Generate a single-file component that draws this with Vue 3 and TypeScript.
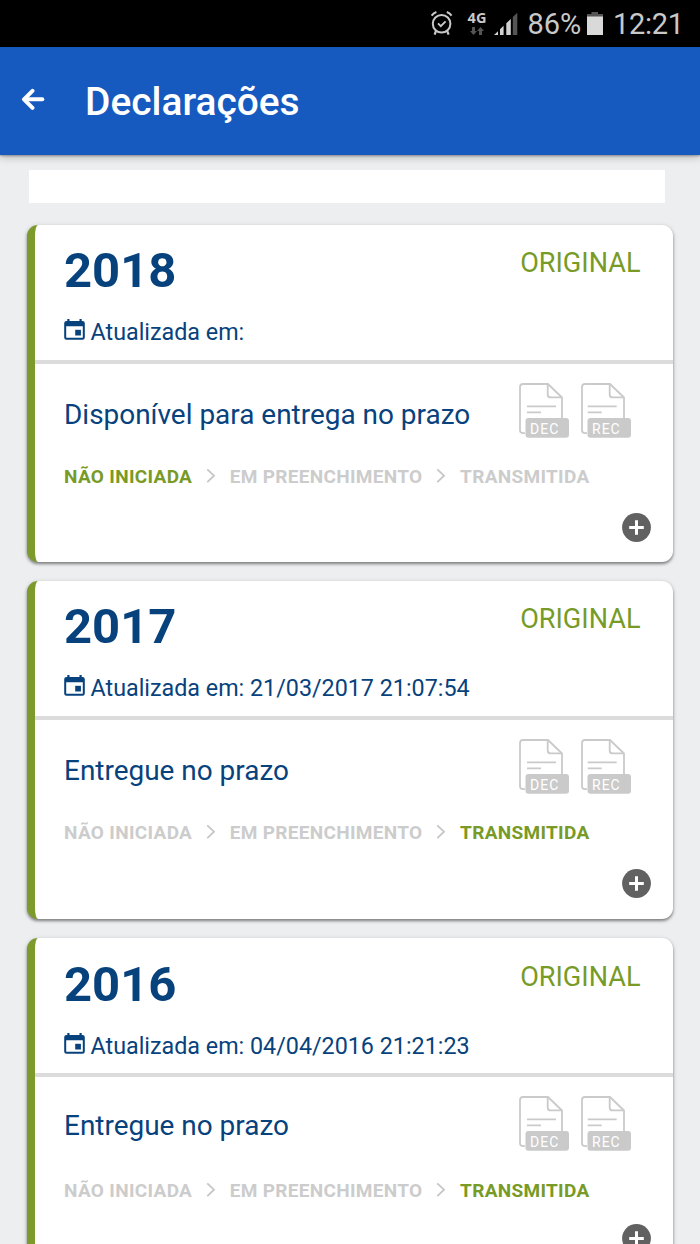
<script setup lang="ts">
interface Declaration {
  year: number
  updated: string
  status: string
  step: number
}

const steps: string[] = ['NÃO INICIADA', 'EM PREENCHIMENTO', 'TRANSMITIDA']

const files = [
  { label: 'DEC', shift: 0 },
  { label: 'REC', shift: -1.3 },
]

const declarations: Declaration[] = [
  { year: 2018, updated: '', status: 'Disponível para entrega no prazo', step: 0 },
  { year: 2017, updated: '21/03/2017 21:07:54', status: 'Entregue no prazo', step: 2 },
  { year: 2016, updated: '04/04/2016 21:21:23', status: 'Entregue no prazo', step: 2 },
]
</script>

<template>
  <div class="screen">
    <div class="statusbar">
      <svg class="alarm" width="22" height="25" viewBox="0 0 22 25" fill="none" stroke="#c9c9c9">
        <circle cx="10.600" cy="12.700" r="8.800" stroke-width="2" />
        <path d="M7 12.400l2.800 2.800 4.800-4.800" stroke-width="1.900" />
        <path d="M0.600 4.600Q2.600 1.900 5.400 1M15.800 1Q18.600 1.900 20.600 4.600" stroke-width="2" />
        <path d="M5 20L3.600 23.600M16.200 20L17.600 23.600" stroke-width="2.200" />
      </svg>
      <div class="network">
        <span class="network-type">4G</span>
        <svg width="14" height="8" viewBox="0 0 14 8" fill="#555">
          <path d="M2 0h3v4h2L3.500 8 0 4h2zM9 8h3V4h2L10.500 0 7 4h2z" />
        </svg>
      </div>
      <svg class="signal" width="24" height="23" viewBox="0 0 24 23">
        <path d="M0 23L4 19.200V23zM6 17.200L9.600 13.800V23H6zM12.300 11.200L16.800 6.900V23h-4.500z" fill="#d2d2d2" />
        <path d="M18.800 5L23.300 0.700V23h-4.500z" fill="#555" />
      </svg>
      <span class="battery-level">86%</span>
      <svg class="battery" width="16" height="23" viewBox="0 0 16 23">
        <path d="M4.500 0h6.500v2H16v3H0V2h4.500z" fill="#555" />
        <path d="M0 4.500h16V23H0z" fill="#d9d9d9" />
      </svg>
      <span class="clock">12:21</span>
    </div>

    <header class="appbar">
      <svg class="back" width="24" height="23" viewBox="0 0 24 23" fill="none" stroke="#fff" stroke-width="4" stroke-linecap="round" stroke-linejoin="round">
        <path d="M11.500 2.800L3 11.300l8.500 8.500" />
        <path d="M4 11.300h17.300" />
      </svg>
      <h1>Declarações</h1>
    </header>

    <main class="content">
      <div class="blank"></div>
      <article v-for="d in declarations" :key="d.year" class="card" :class="`card-${d.year}`">
        <section class="head">
          <div class="head-row">
            <h2>{{ d.year }}</h2>
            <span class="kind">ORIGINAL</span>
          </div>
          <div class="updated">
            <svg width="21" height="21" viewBox="0 0 21 21" fill="#07427d">
              <path fill-rule="evenodd" d="M3.300 0h2.200v2h10V0h2.200v2h.8a2.300 2.300 0 0 1 2.300 2.300v14.200a2.300 2.300 0 0 1-2.300 2.300H2.500A2.300 2.300 0 0 1 .2 18.500V4.300A2.300 2.300 0 0 1 2.500 2h.8zM2.200 7.300v10.900q0 .6.600.6h15.400q.6 0 .6-.6V7.300z" />
              <path d="M11.200 10.800h5.700v5.700h-5.700z" />
            </svg>
            <span>Atualizada em: {{ d.updated }}</span>
          </div>
        </section>
        <section class="body">
          <div class="body-row">
            <p class="status">{{ d.status }}</p>
            <div class="files">
              <svg v-for="f in files" :key="f.label" width="50" height="55" viewBox="0 0 50 55">
                <g fill="none" stroke="#cacaca" stroke-width="1.800">
                  <path d="M6 50.200H4Q1 50.200 1 47.200V4Q1 1 4 1H29L43 14.500V35" />
                  <path d="M28.700 1V11.400Q28.700 14.400 31.700 14.400H43" />
                  <path :transform="`translate(${f.shift} 0)`" d="M8 23.400H37M8 29.300H22" />
                </g>
                <rect x="6.500" y="35" width="43.500" height="19.700" rx="3" fill="#cacaca" />
                <text x="11" y="51" class="file-label">{{ f.label }}</text>
              </svg>
            </div>
          </div>
          <div class="steps">
            <template v-for="(s, i) in steps" :key="s">
              <svg v-if="i > 0" width="10" height="16" viewBox="0 0 10 16" fill="none" stroke="#c6c6c6" stroke-width="1.800">
                <path d="M1.300 1.300L8 7.700l-6.700 6.400" />
              </svg>
              <span :class="{ active: i === d.step }">{{ s }}</span>
            </template>
          </div>
          <svg class="add" width="29" height="29" viewBox="0 0 29 29">
            <circle cx="14.500" cy="14.500" r="14.400" fill="#616161" />
            <path d="M7.200 14.500h14.600M14.500 7.200v14.600" stroke="#fff" stroke-width="3" />
          </svg>
        </section>
      </article>
    </main>
  </div>
</template>

<style>
body {
  margin: 0;
  overflow: hidden;
}
</style>

<style scoped>
.screen {
  width: 700px;
  height: 1244px;
  overflow: hidden;
  background: #edeef0;
  font-family: Roboto, "Liberation Sans", sans-serif;
  display: flex;
  flex-direction: column;
}

.statusbar {
  height: 46.500px;
  flex: none;
  box-sizing: border-box;
  background: #000;
  color: #c9c9c9;
  display: flex;
  align-items: flex-start;
  padding-left: 431px;
}

.alarm {
  margin-top: 11px;
}

.network {
  width: 22px;
  margin: 9px 0 0 13px;
  display: flex;
  flex-direction: column;
  align-items: center;
}

.network-type {
  font: 700 14.500px/18px "Open Sans", sans-serif;
}

.signal {
  margin: 12px 0 0 6px;
}

.battery-level,
.clock {
  font-size: 29px;
  line-height: 34px;
  margin-top: 7px;
  white-space: nowrap;
}

.battery-level {
  width: 53px;
  margin-left: 9.500px;
}

.battery {
  margin: 12px 0 0 6.500px;
}

.clock {
  margin-left: 10px;
  letter-spacing: -0.300px;
}

.appbar {
  height: 108.500px;
  flex: none;
  background: #165abf;
  box-shadow: 0 1px 2px rgba(0, 0, 0, 0.3), 0 2px 8px rgba(0, 0, 0, 0.25);
  display: flex;
  align-items: flex-start;
  padding-left: 20.500px;
  z-index: 1;
}

.back {
  margin-top: 41px;
}

h1 {
  margin: 32.500px 0 0 40.500px;
  font-size: 38.900px;
  line-height: 46px;
  font-weight: 500;
  color: #fff;
}

.content {
  padding: 15px 27px 0;
  flex: none;
}

.blank {
  height: 33px;
  margin: 0 8px 22px 2px;
  background: #fff;
}

.card {
  box-sizing: border-box;
  height: 337px;
  margin-bottom: 19px;
  border-left: 8px solid #7d9a2c;
  border-radius: 11px;
  background: #fff;
  box-shadow: 0 2px 3px rgba(0, 0, 0, 0.4), 0 1px 5px rgba(0, 0, 0, 0.15);
}

.card-2017 {
  height: 338px;
}

.head {
  box-sizing: border-box;
  height: 139px;
  padding: 20px 32.500px 0 29px;
  border-bottom: 4px solid #dcdcdc;
}

.head-row {
  display: flex;
  justify-content: space-between;
  align-items: flex-start;
}

h2 {
  margin: 1px 0 0;
  font-size: 49px;
  line-height: 50px;
  font-weight: 700;
  color: #07427d;
}

.kind {
  font-size: 27.100px;
  line-height: 36px;
  color: #789a26;
}

.card-2016 h2 {
  margin-top: 2px;
}

.card-2016 .kind {
  margin-top: 1px;
}

.updated {
  display: flex;
  align-items: center;
  gap: 6px;
  margin: 21px 0 0 -0.500px;
  font-size: 23.300px;
  line-height: 30px;
  color: #07427d;
}

.updated svg {
  margin-bottom: 5px;
}

.body {
  padding: 19px 0 0 29px;
  display: flex;
  flex-direction: column;
}

.body-row {
  display: flex;
  justify-content: space-between;
  height: 55px;
  padding-right: 42px;
}

.status {
  margin: 16px 0 0;
  font-size: 27.950px;
  line-height: 32px;
  color: #07427d;
  white-space: nowrap;
}

.card-2016 .status {
  margin-top: 14px;
}

.files {
  display: flex;
  gap: 12px;
}

.file-label {
  font-size: 14px;
  font-weight: 400;
  letter-spacing: 1px;
  fill: #fff;
}

.steps {
  display: flex;
  align-items: center;
  margin-top: 24px;
  font-size: 19px;
  letter-spacing: 0.320px;
  line-height: 30px;
  font-weight: 700;
  color: #cccccc;
  white-space: nowrap;
}

.steps svg {
  margin: 0 14px 3px 13.500px;
}

.steps .active {
  color: #789a26;
}

.card-2016 .steps {
  margin-top: 25px;
}

.add {
  align-self: flex-end;
  margin: 20.500px 22.500px 0 0;
}

.card-2016 .add {
  margin-top: 17.500px;
}
</style>
